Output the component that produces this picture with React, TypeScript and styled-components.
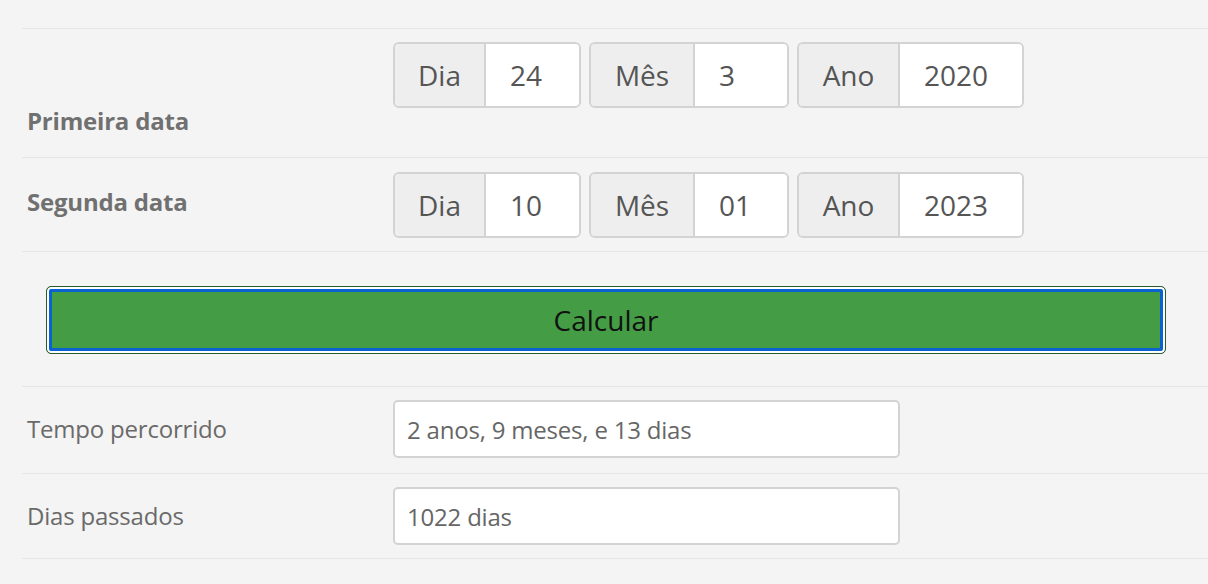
import React from 'react';
import styled, { createGlobalStyle } from 'styled-components';

const GlobalStyle = createGlobalStyle`
  html, body {
    margin: 0;
    padding: 0;
    background: #f4f4f4;
    font-family: "Open Sans", "Liberation Sans", sans-serif;
  }
`;

const Form = styled.div`
  padding: 28px 0 0 22px;
`;

const Row = styled.div<{ $pad: string }>`
  display: grid;
  grid-template-columns: 371px 1fr;
  border-top: 1px solid #e6e6e6;
  padding: ${p => p.$pad};
  &:last-child {
    border-bottom: 1px solid #e6e6e6;
  }
`;

const Label = styled.div<{ $bold?: boolean; $align?: string; $shift?: number }>`
  padding-left: 5px;
  align-self: ${p => p.$align || 'center'};
  margin-top: ${p => p.$shift || 0}px;
  font-size: 24px;
  line-height: 30px;
  letter-spacing: -0.2px;
  font-weight: ${p => (p.$bold ? 700 : 400)};
  color: ${p => (p.$bold ? '#707070' : '#6a6a6a')};
`;

const Groups = styled.div`
  display: flex;
  gap: 8px;
`;

const Group = styled.div`
  display: flex;
  height: 66px;
  box-sizing: border-box;
  border: 2px solid #d3d3d3;
  border-radius: 6px;
  overflow: hidden;
  font-size: 28px;
  color: #555;
`;

const Addon = styled.div<{ $w: number }>`
  width: ${p => p.$w}px;
  box-sizing: border-box;
  display: flex;
  align-items: center;
  justify-content: center;
  background: #eeeeee;
  border-right: 2px solid #d3d3d3;
`;

const Value = styled.div<{ $w: number }>`
  width: ${p => p.$w}px;
  box-sizing: border-box;
  display: flex;
  align-items: center;
  padding-left: 24px;
  background: #fff;
`;

const ButtonRow = styled.div`
  border-top: 1px solid #e6e6e6;
  padding: 34px 42px 32px 24px;
`;

const CalcButton = styled.button`
  display: block;
  width: 100%;
  height: 68px;
  box-sizing: border-box;
  border: 1px solid #2a5b2a;
  border-radius: 5px;
  background: #449d44;
  box-shadow: inset 0 0 0 2px #ffffff, inset 0 0 0 5px #0a62d0;
  font-family: "Open Sans", "Liberation Sans", sans-serif;
  font-size: 28px;
  color: #111;
  cursor: pointer;
`;

const Output = styled.div`
  width: 507px;
  height: 58px;
  box-sizing: border-box;
  border: 2px solid #d3d3d3;
  border-radius: 5px;
  background: #fff;
  display: flex;
  align-items: center;
  padding-left: 12px;
  font-size: 24px;
  letter-spacing: -0.2px;
  color: #666;
`;

type Part = { label: string; lw: number; value: string; vw: number };

const DateGroups: React.FC<{ parts: Part[] }> = ({ parts }) => (
  <Groups>
    {parts.map(p => (
      <Group key={p.label}>
        <Addon $w={p.lw}>{p.label}</Addon>
        <Value $w={p.vw}>{p.value}</Value>
      </Group>
    ))}
  </Groups>
);

const App: React.FC = () => {
  const first: Part[] = [
    { label: 'Dia', lw: 91, value: '24', vw: 93 },
    { label: 'Mês', lw: 104, value: '3', vw: 92 },
    { label: 'Ano', lw: 101, value: '2020', vw: 122 },
  ];
  const second: Part[] = [
    { label: 'Dia', lw: 91, value: '10', vw: 93 },
    { label: 'Mês', lw: 104, value: '01', vw: 92 },
    { label: 'Ano', lw: 101, value: '2023', vw: 122 },
  ];

  return (
    <>
      <GlobalStyle />
      <Form>
        <Row $pad="13px 0 21px">
          <Label $bold $align="end">Primeira data</Label>
          <div style={{ marginBottom: 28 }}>
            <DateGroups parts={first} />
          </div>
        </Row>
        <Row $pad="14px 0 13px">
          <Label $bold $shift={-6}>Segunda data</Label>
          <DateGroups parts={second} />
        </Row>
        <ButtonRow>
          <CalcButton>Calcular</CalcButton>
        </ButtonRow>
        <Row $pad="13px 0 15px">
          <Label>Tempo percorrido</Label>
          <Output>2 anos, 9 meses, e 13 dias</Output>
        </Row>
        <Row $pad="13px 0 13px">
          <Label>Dias passados</Label>
          <Output>1022 dias</Output>
        </Row>
      </Form>
    </>
  );
};

export default App;
